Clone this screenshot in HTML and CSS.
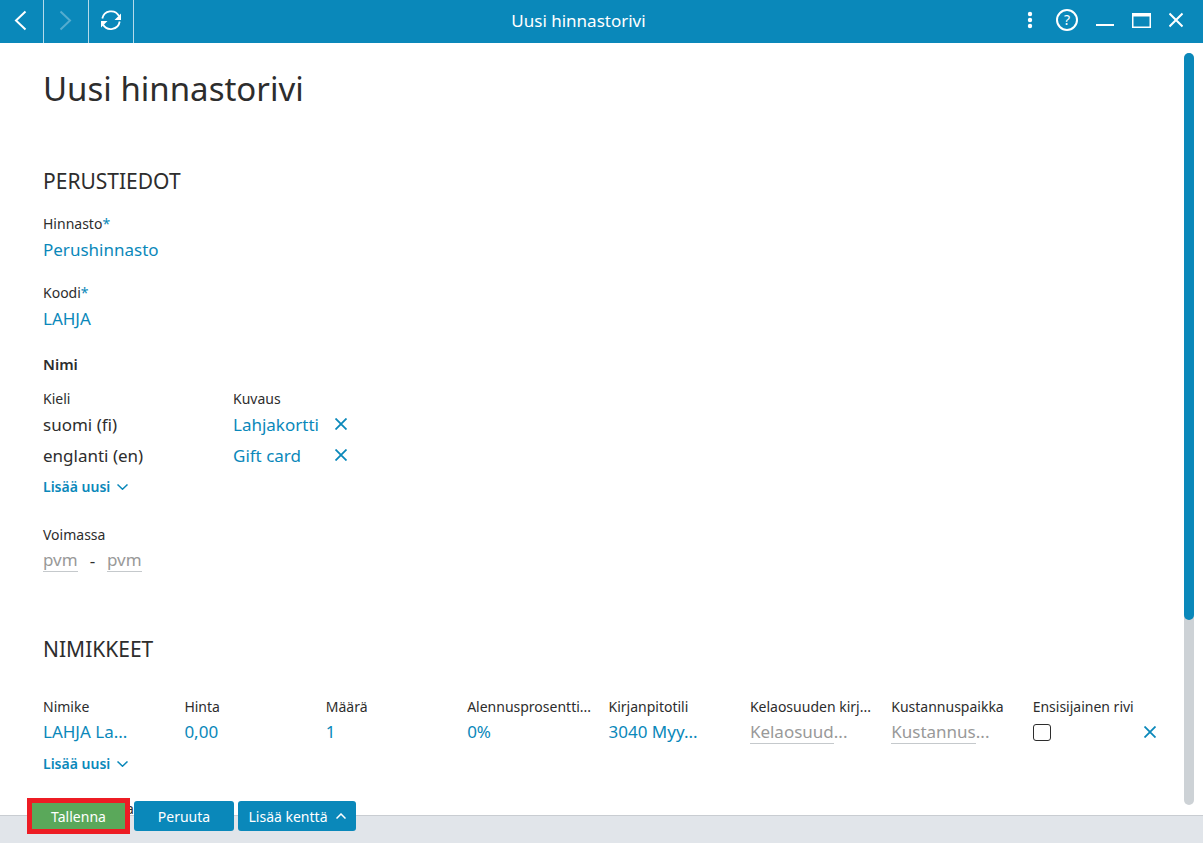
FILE: index.html
```html
<!DOCTYPE html>
<html lang="fi">
<head>
<meta charset="utf-8">
<title>Uusi hinnastorivi</title>
<link rel="stylesheet" href="styles.css">
</head>
<body>
<div class="window">
  <header class="titlebar">
    <nav class="nav">
      <button class="nav-btn" aria-label="Takaisin"><svg width="43" height="43" viewBox="0 0 43 43"><path d="M25.5 11.5 16 20.500l9.500 9"/></svg></button>
      <button class="nav-btn" aria-label="Eteenpäin" disabled><svg width="44" height="43" viewBox="0 0 44 43"><path d="M16.500 11.500 26 20.500l-9.500 9"/></svg></button>
      <button class="nav-btn" aria-label="Päivitä"><svg width="44" height="43" viewBox="0 0 44 43"><path class="arc" d="M13.300 18.500a9 9 0 0 1 16.700-2.500M30.700 21.500a9 9 0 0 1-16.700 3"/><path class="solid" d="M32 13.500v6.500h-6.500zM12 27.500v-6.500h6.500z"/></svg></button>
    </nav>
    <div class="titlebar-text">Uusi hinnastorivi</div>
    <div class="tools">
      <button class="tool" aria-label="Valikko"><svg width="14" height="18" viewBox="0 0 14 18"><g class="solid"><circle cx="6" cy="3" r="2.200"/><circle cx="6" cy="9" r="2.200"/><circle cx="6" cy="15" r="2.200"/></g></svg></button>
      <button class="tool help" aria-label="Ohje">?</button>
      <button class="tool" aria-label="Pienennä"><svg width="18" height="18" viewBox="0 0 18 18"><path d="M0 14h18"/></svg></button>
      <button class="tool" aria-label="Suurenna"><svg width="19" height="18" viewBox="0 0 19 18"><path class="thin" d="M.75 2v14.200h17.500V2"/><path class="solid" d="M0 2h19v3.500H0z"/></svg></button>
      <button class="tool" aria-label="Sulje"><svg width="14" height="18" viewBox="0 0 14 18"><path d="M.5 2.500l13 13M13.500 2.500l-13 13"/></svg></button>
    </div>
  </header>

  <div class="body">
    <main class="content">
      <h1 class="title">Uusi hinnastorivi</h1>

      <section>
        <h2 class="section-title">PERUSTIEDOT</h2>
        <div class="field">
          <div class="label">Hinnasto<span class="required">*</span></div>
          <a class="value" href="#">Perushinnasto</a>
        </div>
        <div class="field">
          <div class="label">Koodi<span class="required">*</span></div>
          <a class="value" href="#">LAHJA</a>
        </div>
        <h3 class="group-title">Nimi</h3>
        <table class="names">
          <thead><tr><th class="label">Kieli</th><th class="label">Kuvaus</th><td></td></tr></thead>
          <tbody>
            <tr><td>suomi (fi)</td><td><a class="value" href="#">Lahjakortti</a></td><td><button class="remove" aria-label="Poista"><svg width="12" height="12" viewBox="0 0 12 12"><path d="M.5.5l11 11M11.500.5l-11 11"/></svg></button></td></tr>
            <tr><td>englanti (en)</td><td><a class="value" href="#">Gift card</a></td><td><button class="remove" aria-label="Poista"><svg width="12" height="12" viewBox="0 0 12 12"><path d="M.5.5l11 11M11.500.5l-11 11"/></svg></button></td></tr>
          </tbody>
        </table>
        <button class="add">Lisää uusi <svg width="11" height="6" viewBox="0 0 11 6"><path d="M.5.5l5 4.700 5-4.700"/></svg></button>
        <div class="validity">
          <label class="label" for="from">Voimassa</label>
          <div class="dates"><input class="date" id="from" placeholder="pvm"><span class="dash">-</span><input class="date" placeholder="pvm" aria-label="Voimassa asti"></div>
        </div>
      </section>

      <section class="items-section">
        <h2 class="section-title">NIMIKKEET</h2>
        <table class="items">
          <colgroup><col class="col" span="7"><col><col class="col-remove"></colgroup>
          <thead>
            <tr><th class="label">Nimike</th><th class="label">Hinta</th><th class="label">Määrä</th><th class="label">Alennusprosentti...</th><th class="label">Kirjanpitotili</th><th class="label">Kelaosuuden kirj...</th><th class="label">Kustannuspaikka</th><th class="label"><label for="primary">Ensisijainen rivi</label></th><td></td></tr>
          </thead>
          <tbody>
            <tr><td><a class="value" href="#">LAHJA La...</a></td><td><a class="value" href="#">0,00</a></td><td><a class="value" href="#">1</a></td><td><a class="value" href="#">0%</a></td><td><a class="value" href="#">3040 Myy...</a></td><td><button class="empty"><span class="underlined">Kelaosuud</span>...</button></td><td><button class="empty"><span class="underlined">Kustannus</span>...</button></td><td><input class="check" type="checkbox" id="primary"></td><td><button class="remove" aria-label="Poista"><svg width="12" height="12" viewBox="0 0 12 12"><path d="M.5.5l11 11M11.500.5l-11 11"/></svg></button></td></tr>
          </tbody>
        </table>
        <button class="add">Lisää uusi <svg width="11" height="6" viewBox="0 0 11 6"><path d="M.5.5l5 4.700 5-4.700"/></svg></button>
      </section>
      <div class="label next-field">Voimassaoloa</div>
    </main>
    <div class="scrollbar"><div class="thumb"></div></div>
  </div>

  <footer class="footer">
    <div class="actions">
      <button class="btn save">Tallenna</button>
      <button class="btn">Peruuta</button>
      <button class="btn wide">Lisää kenttä <svg width="10" height="6" viewBox="0 0 10 6"><path d="M.5 5.500 5 1l4.500 4.500"/></svg></button>
    </div>
  </footer>
</div>
</body>
</html>
```
FILE: styles.css
```css
* { box-sizing: border-box; }
body { margin: 0; font-family: "Noto Sans", "Open Sans", sans-serif; font-size: 17px; color: #2d2d2d; background: #fff; }
button { font: inherit; color: inherit; background: none; border: 0; padding: 0; cursor: pointer; }
svg { display: block; fill: none; stroke: currentColor; stroke-width: 2; }
.thin { stroke-width: 1.500; }
.arc { stroke-width: 1.800; }
.solid { fill: currentColor; stroke: none; }

.window { height: 100vh; display: flex; flex-direction: column; }
.titlebar { display: grid; grid-template-columns: 1fr auto 1fr; align-items: center; height: 43px; flex: none; background: #0a88ba; color: #fff; padding-right: 20px; }
.titlebar-text { margin-right: 26px; padding-bottom: 2px; }
.nav { display: flex; }
.nav-btn { border-right: 1px solid #b5dbea; }
.nav-btn:disabled svg { opacity: .3; }
.tools { display: flex; justify-content: flex-end; align-items: center; gap: 18px; padding-bottom: 4px; }
.tool.help { width: 22px; height: 22px; border: 2px solid #fff; border-radius: 50%; font-size: 14px; line-height: 18px; }

.body { position: relative; flex: 1; min-height: 0; display: flex; }
.content { flex: 1; min-width: 0; overflow: hidden; padding: 22px 29px 0 43px; }
.title { margin: 0 0 52px; font-size: 33px; line-height: 48px; font-weight: 400; }
.section-title { margin: 0; font-size: 21px; line-height: 32px; font-weight: 400; }
.label { display: block; font-size: 14px; line-height: 24px; font-weight: 400; text-align: left; white-space: nowrap; }
.required { color: #0a88ba; }
.value { display: block; line-height: 28px; color: #0a88ba; text-decoration: none; white-space: nowrap; }
.field { margin: 15px 0 17px; }
.field + .field { margin-top: 0; }
.group-title { margin: 19px 0 11px; font-size: 15px; line-height: 24px; font-weight: 600; }
table { border-collapse: collapse; table-layout: fixed; }
th, td { padding: 0; }
th.label { display: table-cell; }
.names { width: 320px; }
.names th:first-child { width: 190px; }
.names th:nth-child(2) { width: 102px; }
.names tbody td { height: 31px; line-height: 28px; vertical-align: top; }
.remove { display: block; color: #0a88ba; }
.names .remove { margin-top: 7px; }
.remove svg { stroke-width: 1.800; }
.add { display: flex; align-items: center; gap: 7px; margin-top: 2px; font-size: 14px; line-height: 24px; font-weight: 600; color: #0a88ba; }
.add svg { stroke-width: 1.500; }
.validity { margin-top: 24px; }
.dates { display: flex; align-items: center; height: 26px; }
.date { width: 35px; height: 24px; padding: 0; border: 0; border-bottom: 1px solid #c5c9cc; font: inherit; }
.date::placeholder { color: #999; opacity: 1; }
.dash { width: 29px; text-align: center; }

.items-section { margin-top: 60px; }
.items { width: 100%; margin-top: 30px; }
.items .col { width: 12.5%; }
.items .col-remove { width: 30px; }
.items .value { line-height: 26px; }
.items + .add { margin-top: 7px; }
.empty { display: block; line-height: 24px; color: #999; }
.underlined { display: inline-block; line-height: 23px; border-bottom: 1px solid #c5c9cc; }
.check { display: block; appearance: none; width: 18px; height: 17px; margin: 0; border: 1px solid #2d2d2d; border-radius: 3px; }
.next-field { margin-top: 21px; }

.scrollbar { position: absolute; right: 9px; top: 10px; bottom: 10px; width: 10px; border-radius: 5px; background: #cdd2d6; }
.thumb { height: 75.4%; border-radius: 5px; background: #0a88ba; }

.footer { position: relative; flex: none; height: 28px; border-top: 1px solid #c9cdd2; background: #e1e5ea; padding-left: 27px; }
.actions { display: flex; align-items: center; gap: 4px; margin-top: -18px; }
.btn { min-width: 100px; height: 30px; border-radius: 3px; background: #0a88ba; color: #fff; font-size: 14px; }
.save { width: 103px; height: 36px; border: 5px solid #ed1c24; border-radius: 0; background: #5aa85a; }
.wide { display: flex; align-items: center; justify-content: center; gap: 8px; width: 118px; }
.wide svg { stroke-width: 1.500; }
```
